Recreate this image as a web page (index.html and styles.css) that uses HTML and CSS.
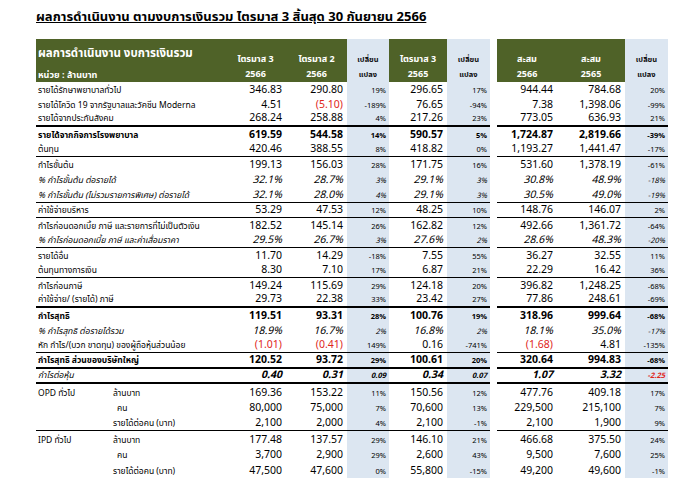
FILE: index.html
```html
<!DOCTYPE html>
<html lang="th">
<head>
<meta charset="utf-8">
<title>ผลการดำเนินงาน</title>
<link rel="stylesheet" href="styles.css">
</head>
<body>
<div class="page">
  <h1 class="title">ผลการดำเนินงาน ตามงบการเงินรวม ไตรมาส 3 สิ้นสุด 30 กันยายน 2566</h1>
  <div class="sheet">
    <div class="hd">
      <div class="gr hl"><span class="h-main">ผลการดำเนินงาน งบการเงินรวม</span><span class="h-unit">หน่วย : ล้านบาท</span></div>
      <div class="gr hc"><span>ไตรมาส 3</span><span>2566</span></div>
      <div class="gr hc"><span>ไตรมาส 2</span><span>2566</span></div>
      <div class="bl hc hp"><span>เปลี่ยน</span><span>แปลง</span></div>
      <div class="gr hc"><span>ไตรมาส 3</span><span>2565</span></div>
      <div class="bl hc hp"><span>เปลี่ยน</span><span>แปลง</span></div>
      <div class="x"></div>
      <div class="gr hc"><span>สะสม</span><span>2566</span></div>
      <div class="gr hc"><span>สะสม</span><span>2565</span></div>
      <div class="bl hc hp"><span>เปลี่ยน</span><span>แปลง</span></div>
    </div>

    <div class="row"><div class="l">รายได้รักษาพยาบาลทั่วไป</div><div class="n">346.83</div><div class="n">290.80</div><div class="p">19%</div><div class="n">296.65</div><div class="p">17%</div><div class="x"></div><div class="n">944.44</div><div class="n">784.68</div><div class="p">20%</div></div>
    <div class="row"><div class="l">รายได้โควิด 19 จากรัฐบาลและวัคซีน Moderna</div><div class="n">4.51</div><div class="n red">(5.10)</div><div class="p">-189%</div><div class="n">76.65</div><div class="p">-94%</div><div class="x"></div><div class="n">7.38</div><div class="n">1,398.06</div><div class="p">-99%</div></div>
    <div class="row b2"><div class="l">รายได้จากประกันสังคม</div><div class="n">268.24</div><div class="n">258.88</div><div class="p">4%</div><div class="n">217.26</div><div class="p">23%</div><div class="x"></div><div class="n">773.05</div><div class="n">636.93</div><div class="p">21%</div></div>
    <div class="row bold"><div class="l">รายได้จากกิจการโรงพยาบาล</div><div class="n">619.59</div><div class="n">544.58</div><div class="p">14%</div><div class="n">590.57</div><div class="p">5%</div><div class="x"></div><div class="n">1,724.87</div><div class="n">2,819.66</div><div class="p">-39%</div></div>
    <div class="row b1"><div class="l">ต้นทุน</div><div class="n">420.46</div><div class="n">388.55</div><div class="p">8%</div><div class="n">418.82</div><div class="p">0%</div><div class="x"></div><div class="n">1,193.27</div><div class="n">1,441.47</div><div class="p">-17%</div></div>
    <div class="row"><div class="l">กำไรขั้นต้น</div><div class="n">199.13</div><div class="n">156.03</div><div class="p">28%</div><div class="n">171.75</div><div class="p">16%</div><div class="x"></div><div class="n">531.60</div><div class="n">1,378.19</div><div class="p">-61%</div></div>
    <div class="row ital"><div class="l">% กำไรขั้นต้น ต่อรายได้</div><div class="n">32.1%</div><div class="n">28.7%</div><div class="p">3%</div><div class="n">29.1%</div><div class="p">3%</div><div class="x"></div><div class="n">30.8%</div><div class="n">48.9%</div><div class="p">-18%</div></div>
    <div class="row ital b1 t16"><div class="l">% กำไรขั้นต้น (ไม่รวมรายการพิเศษ) ต่อรายได้</div><div class="n">32.1%</div><div class="n">28.0%</div><div class="p">4%</div><div class="n">29.1%</div><div class="p">3%</div><div class="x"></div><div class="n">30.5%</div><div class="n">49.0%</div><div class="p">-19%</div></div>
    <div class="row b1"><div class="l">ค่าใช้จ่ายบริหาร</div><div class="n">53.29</div><div class="n">47.53</div><div class="p">12%</div><div class="n">48.25</div><div class="p">10%</div><div class="x"></div><div class="n">148.76</div><div class="n">146.07</div><div class="p">2%</div></div>
    <div class="row"><div class="l">กำไรก่อนดอกเบี้ย ภาษี และรายการที่ไม่เป็นตัวเงิน</div><div class="n">182.52</div><div class="n">145.14</div><div class="p">26%</div><div class="n">162.82</div><div class="p">12%</div><div class="x"></div><div class="n">492.66</div><div class="n">1,361.72</div><div class="p">-64%</div></div>
    <div class="row ital b1"><div class="l">% กำไรก่อนดอกเบี้ย ภาษี และค่าเสื่อมราคา</div><div class="n">29.5%</div><div class="n">26.7%</div><div class="p">3%</div><div class="n">27.6%</div><div class="p">2%</div><div class="x"></div><div class="n">28.6%</div><div class="n">48.3%</div><div class="p">-20%</div></div>
    <div class="row"><div class="l">รายได้อื่น</div><div class="n">11.70</div><div class="n">14.29</div><div class="p">-18%</div><div class="n">7.55</div><div class="p">55%</div><div class="x"></div><div class="n">36.27</div><div class="n">32.55</div><div class="p">11%</div></div>
    <div class="row b1"><div class="l">ต้นทุนทางการเงิน</div><div class="n">8.30</div><div class="n">7.10</div><div class="p">17%</div><div class="n">6.87</div><div class="p">21%</div><div class="x"></div><div class="n">22.29</div><div class="n">16.42</div><div class="p">36%</div></div>
    <div class="row"><div class="l">กำไรก่อนภาษี</div><div class="n">149.24</div><div class="n">115.69</div><div class="p">29%</div><div class="n">124.18</div><div class="p">20%</div><div class="x"></div><div class="n">396.82</div><div class="n">1,248.25</div><div class="p">-68%</div></div>
    <div class="row b2"><div class="l">ค่าใช้จ่าย/ (รายได้) ภาษี</div><div class="n">29.73</div><div class="n">22.38</div><div class="p">33%</div><div class="n">23.42</div><div class="p">27%</div><div class="x"></div><div class="n">77.86</div><div class="n">248.61</div><div class="p">-69%</div></div>
    <div class="row bold"><div class="l">กำไรสุทธิ</div><div class="n">119.51</div><div class="n">93.31</div><div class="p">28%</div><div class="n">100.76</div><div class="p">19%</div><div class="x"></div><div class="n">318.96</div><div class="n">999.64</div><div class="p">-68%</div></div>
    <div class="row ital"><div class="l">% กำไรสุทธิ ต่อรายได้รวม</div><div class="n">18.9%</div><div class="n">16.7%</div><div class="p">2%</div><div class="n">16.8%</div><div class="p">2%</div><div class="x"></div><div class="n">18.1%</div><div class="n">35.0%</div><div class="p">-17%</div></div>
    <div class="row b1"><div class="l">หัก กำไร/(บวก ขาดทุน) ของผู้ถือหุ้นส่วนน้อย</div><div class="n red">(1.01)</div><div class="n red">(0.41)</div><div class="p">149%</div><div class="n">0.16</div><div class="p">-741%</div><div class="x"></div><div class="n red">(1.68)</div><div class="n">4.81</div><div class="p">-135%</div></div>
    <div class="row bold b2 t16"><div class="l">กำไรสุทธิ ส่วนของบริษัทใหญ่</div><div class="n">120.52</div><div class="n">93.72</div><div class="p">29%</div><div class="n">100.61</div><div class="p">20%</div><div class="x"></div><div class="n">320.64</div><div class="n">994.83</div><div class="p">-68%</div></div>
    <div class="row eps b2"><div class="l">กำไรต่อหุ้น</div><div class="n">0.40</div><div class="n">0.31</div><div class="p">0.09</div><div class="n">0.34</div><div class="p">0.07</div><div class="x"></div><div class="n">1.07</div><div class="n">3.32</div><div class="p red">-2.25</div></div>
    <div class="row t16"><div class="l"><span class="grp">OPD ทั่วไป</span><span class="sub">ล้านบาท</span></div><div class="n">169.36</div><div class="n">153.22</div><div class="p">11%</div><div class="n">150.56</div><div class="p">12%</div><div class="x"></div><div class="n">477.76</div><div class="n">409.18</div><div class="p">17%</div></div>
    <div class="row"><div class="l"><span class="grp"></span><span class="sub k">คน</span></div><div class="n">80,000</div><div class="n">75,000</div><div class="p">7%</div><div class="n">70,600</div><div class="p">13%</div><div class="x"></div><div class="n">229,500</div><div class="n">215,100</div><div class="p">7%</div></div>
    <div class="row b1 t16"><div class="l"><span class="grp"></span><span class="sub">รายได้ต่อคน (บาท)</span></div><div class="n">2,100</div><div class="n">2,000</div><div class="p">4%</div><div class="n">2,100</div><div class="p">-1%</div><div class="x"></div><div class="n">2,100</div><div class="n">1,900</div><div class="p">9%</div></div>
    <div class="row t16"><div class="l"><span class="grp">IPD ทั่วไป</span><span class="sub">ล้านบาท</span></div><div class="n">177.48</div><div class="n">137.57</div><div class="p">29%</div><div class="n">146.10</div><div class="p">21%</div><div class="x"></div><div class="n">466.68</div><div class="n">375.50</div><div class="p">24%</div></div>
    <div class="row"><div class="l"><span class="grp"></span><span class="sub k">คน</span></div><div class="n">3,700</div><div class="n">2,900</div><div class="p">29%</div><div class="n">2,600</div><div class="p">43%</div><div class="x"></div><div class="n">9,500</div><div class="n">7,600</div><div class="p">25%</div></div>
    <div class="row t16"><div class="l"><span class="grp"></span><span class="sub">รายได้ต่อคน (บาท)</span></div><div class="n">47,500</div><div class="n">47,600</div><div class="p">0%</div><div class="n">55,800</div><div class="p">-15%</div><div class="x"></div><div class="n">49,200</div><div class="n">49,600</div><div class="p">-1%</div></div>
  </div>
</div>
</body>
</html>
```
FILE: styles.css
```css
* { box-sizing: border-box; }

body {
  margin: 0;
  background: #ffffff;
  color: #000000;
  font-family: "Waree", "Tahoma", "Noto Sans Thai", "Loma", "DejaVu Sans", sans-serif;
}

.page {
  padding: 9px 0 0 36px;
}

.title {
  margin: 0;
  height: 30px;
  font-size: 13px;
  line-height: 16px;
  font-weight: bold;
  text-decoration: underline;
}

.sheet {
  width: 632px;
}

.hd,
.row {
  display: grid;
  grid-template-columns: 189px 61px 61px 42px 58px 43px 7px 60px 68px 43px;
}

.hd {
  height: 43px;
}

.row {
  height: 15px;
}

.row.t16 {
  height: 16px;
}

.gr {
  background: #4f6228;
  color: #ffffff;
}

.bl,
.p {
  background: #dce6f1;
}

.hl {
  display: flex;
  flex-direction: column;
  justify-content: flex-end;
  padding-left: 2px;
  font-weight: bold;
}

.h-main {
  font-size: 11.5px;
  line-height: 29px;
}

.h-unit {
  font-size: 9px;
  line-height: 14px;
}

.hc {
  display: flex;
  flex-direction: column;
  justify-content: flex-end;
  align-items: center;
  font-weight: bold;
  font-size: 9px;
  line-height: 15px;
}

.hp {
  font-size: 7.5px;
  color: #111111;
}

.row > div {
  display: flex;
  align-items: flex-end;
  white-space: nowrap;
}

.l {
  padding-left: 2px;
  font-size: 8.5px;
  line-height: 13px;
}

.n {
  justify-content: flex-end;
  padding-right: 4px;
  font-size: 10.5px;
  line-height: 13px;
}

.p {
  justify-content: flex-end;
  padding-right: 3px;
  padding-bottom: 1px;
  font-size: 7.5px;
  line-height: 11px;
}

.row.b1 > div:not(.x) {
  border-bottom: 1px solid #000000;
}

.row.b2 > div:not(.x) {
  border-bottom: 2px solid #000000;
}

.bold > div {
  font-weight: bold;
}

.ital > div {
  font-style: italic;
}

.eps .l {
  font-style: italic;
}

.eps .n,
.eps .p {
  font-weight: bold;
  font-style: italic;
}

.red {
  color: #e0261b;
}

.grp {
  display: inline-block;
  width: 75px;
}

.sub.k {
  padding-left: 4px;
}
```
